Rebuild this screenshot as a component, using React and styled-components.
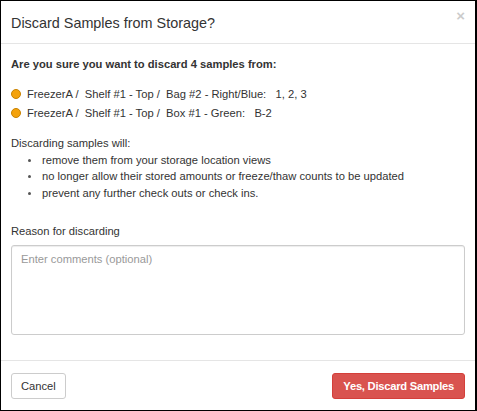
import styled, { createGlobalStyle } from 'styled-components';

const GlobalStyle = createGlobalStyle`
  html, body {
    margin: 0;
    padding: 0;
    background: #fff;
  }
  body {
    font-family: "Liberation Sans", Arial, sans-serif;
    font-size: 11.2px;
    color: #333;
  }
`;

const Modal = styled.div`
  box-sizing: border-box;
  width: 477px;
  height: 411px;
  border: 1px solid #000;
  border-right-width: 2px;
  background: #fff;
  display: flex;
  flex-direction: column;
`;

const Header = styled.div`
  position: relative;
  height: 42px;
  padding: 0 10px;
  display: flex;
  align-items: center;
  border-bottom: 1px solid #e5e5e5;
`;

const Title = styled.h4`
  margin: 0;
  font-size: 14.4px;
  font-weight: normal;
  color: #333;
  padding-top: 1px;
`;

const Close = styled.button`
  position: absolute;
  top: 7px;
  right: 10px;
  border: 0;
  background: none;
  padding: 0;
  font-family: "Liberation Sans", Arial, sans-serif;
  font-size: 15px;
  font-weight: bold;
  line-height: 1;
  color: #000;
  opacity: 0.2;
`;

const Body = styled.div`
  flex: 1;
  padding: 12px 10px 0;
  border-bottom: 1px solid #e5e5e5;
`;

const Question = styled.p`
  margin: 0 0 12px;
  font-weight: bold;
  line-height: 16px;
`;

const SampleRow = styled.div`
  display: flex;
  align-items: center;
  height: 19px;
`;

const Dot = styled.span`
  box-sizing: border-box;
  width: 10px;
  height: 10px;
  border-radius: 50%;
  background: #f4a20c;
  border: 1px solid #c98200;
  margin-right: 6px;
`;

const Path = styled.span`
  white-space: pre;
`;

const Notice = styled.div`
  margin-top: 13px;
  line-height: 16.5px;
`;

const List = styled.ul`
  margin: 0;
  padding-left: 31px;
  list-style: none;
`;

const Item = styled.li`
  position: relative;
  &::before {
    content: '';
    position: absolute;
    left: -14px;
    top: 7px;
    width: 3px;
    height: 3px;
    border-radius: 50%;
    background: #555;
  }
`;

const Label = styled.label`
  display: block;
  margin-top: 22px;
  line-height: 16px;
`;

const TextArea = styled.textarea`
  box-sizing: border-box;
  display: block;
  width: 100%;
  height: 90px;
  margin-top: 6px;
  padding: 5px 9px;
  border: 1px solid #ccc;
  border-radius: 3px;
  font-family: "Liberation Sans", Arial, sans-serif;
  font-size: 11.2px;
  line-height: 16px;
  color: #555;
  resize: none;
  box-shadow: inset 0 1px 1px rgba(0, 0, 0, 0.075);
  &::placeholder {
    color: #999;
  }
`;

const Footer = styled.div`
  height: 49px;
  padding: 0 10px;
  display: flex;
  align-items: center;
  justify-content: space-between;
`;

const Button = styled.button`
  box-sizing: border-box;
  height: 26px;
  padding: 0 ${({ $danger }) => ($danger ? '10px' : '9px')};
  border-radius: 3px;
  font-family: "Liberation Sans", Arial, sans-serif;
  font-size: 11.2px;
  font-weight: ${({ $danger }) => ($danger ? 'bold' : 'normal')};
  letter-spacing: ${({ $danger }) => ($danger ? '-0.25px' : '0')};
  color: ${({ $danger }) => ($danger ? '#fff' : '#333')};
  background: ${({ $danger }) => ($danger ? '#d9534f' : '#fff')};
  border: 1px solid ${({ $danger }) => ($danger ? '#d43f3a' : '#ccc')};
`;

const samples = [
  { path: 'FreezerA /  Shelf #1 - Top /  Bag #2 - Right/Blue:   1, 2, 3' },
  { path: 'FreezerA /  Shelf #1 - Top /  Box #1 - Green:   B-2' },
];

export default function App() {
  return (
    <>
      <GlobalStyle />
      <Modal>
        <Header>
          <Title>Discard Samples from Storage?</Title>
          <Close aria-label="Close">×</Close>
        </Header>
        <Body>
          <Question>Are you sure you want to discard 4 samples from:</Question>
          {samples.map((s) => (
            <SampleRow key={s.path}>
              <Dot />
              <Path>{s.path}</Path>
            </SampleRow>
          ))}
          <Notice>
            Discarding samples will:
            <List>
              <Item>remove them from your storage location views</Item>
              <Item>no longer allow their stored amounts or freeze/thaw counts to be updated</Item>
              <Item>prevent any further check outs or check ins.</Item>
            </List>
          </Notice>
          <Label>Reason for discarding</Label>
          <TextArea placeholder="Enter comments (optional)" />
        </Body>
        <Footer>
          <Button>Cancel</Button>
          <Button $danger>Yes, Discard Samples</Button>
        </Footer>
      </Modal>
    </>
  );
}
